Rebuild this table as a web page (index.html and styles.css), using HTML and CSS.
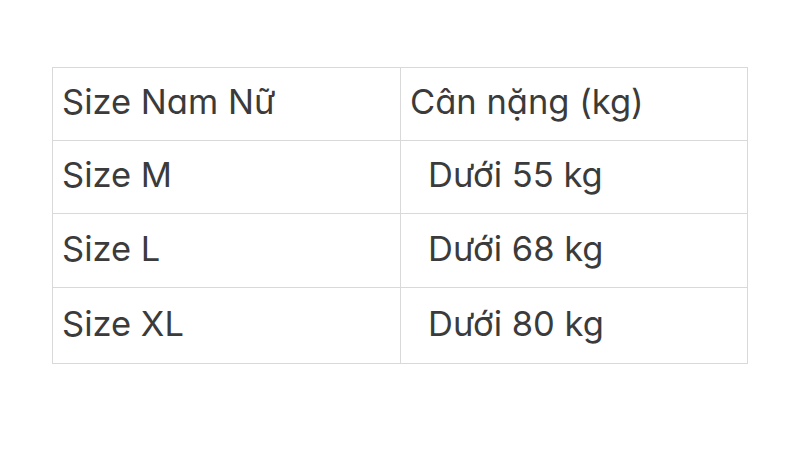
FILE: index.html
```html
<!DOCTYPE html>
<html lang="vi">
<head>
<meta charset="utf-8">
<link rel="stylesheet" href="styles.css">
</head>
<body>
<div class="page">
<table class="size-table">
<tr class="r1"><td class="c1">Size Nam Nữ</td><td class="c2">Cân nặng (kg)</td></tr>
<tr class="r2"><td class="c1">Size M</td><td class="c2 ind">Dưới 55 kg</td></tr>
<tr class="r3"><td class="c1">Size L</td><td class="c2 ind">Dưới 68 kg</td></tr>
<tr class="r4"><td class="c1">Size XL</td><td class="c2 ind">Dưới 80 kg</td></tr>
</table>
</div>
</body>
</html>
```
FILE: styles.css
```css
html, body { margin: 0; padding: 0; background: #fff; }
.page { padding: 67px 0 0 52px; }
.size-table {
  border-collapse: collapse;
  width: 696px;
  font-family: Inter, "Liberation Sans", sans-serif;
  font-feature-settings: "cv11" 1;
  font-size: 34.5px;
  line-height: 40px;
  color: #3b3b3b;
}
.size-table td {
  border: 1px solid #d9d9d9;
  padding: 0 0 4px 9px;
  vertical-align: middle;
  text-align: left;
}
.c1 { width: 338px; }
.ind { padding-left: 27px !important; }
.r1 td, .r2 td { height: 68px; }
.r3 td { height: 69px; }
.r4 td { height: 71px; }
```
